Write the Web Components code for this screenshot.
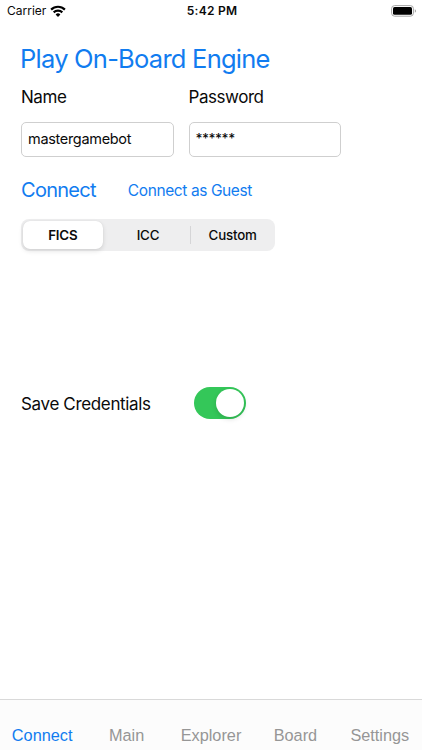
<!DOCTYPE html>
<html lang="en">
<head>
<meta charset="utf-8">
<title>Connect</title>
<style>
html, body {
  margin: 0;
  height: 100%;
  background: #fff;
  overflow: hidden;
}
</style>
</head>
<body>
<connect-app></connect-app>
<script>
function define(name, html) {
  const template = document.createElement('template');
  template.innerHTML = html;
  customElements.define(name, class extends HTMLElement {
    constructor() {
      super();
      this.attachShadow({ mode: 'open' }).appendChild(template.content.cloneNode(true));
    }
  });
}

define('status-bar', `
<style>
:host {
  display: grid;
  grid-template-columns: 1fr auto 1fr;
  align-items: center;
  box-sizing: border-box;
  height: 22px;
  padding: 0 5px 1px 7px;
  font-size: 12px;
}
.carrier { display: flex; align-items: center; gap: 4px; }
.time { font-weight: 600; letter-spacing: 0.25px; }
.battery { justify-self: end; display: flex; }
svg { display: block; }
</style>
<div class="carrier"><slot></slot>
  <svg width="16" height="12" viewBox="0 0 16 12">
    <g fill="none" stroke="#000" stroke-width="2.2">
      <path d="M1.1 4.6a9.8 9.8 0 0 1 13.8 0"/>
      <path d="M3.7 7.4a6.1 6.1 0 0 1 8.6 0"/>
    </g>
    <path d="M8 12 5.6 9.5a3.4 3.4 0 0 1 4.8 0z"/>
  </svg>
</div>
<div class="time"><slot name="time"></slot></div>
<div class="battery">
  <svg width="26" height="12" viewBox="0 0 26 12">
    <rect x="0.6" y="0.6" width="21.8" height="10.6" rx="3" fill="#fff" stroke="#a5a5a5"/>
    <rect x="2" y="2" width="19" height="7.8" rx="1.6"/>
    <path d="M23.8 4.2q1.3.5 1.3 1.8t-1.3 1.8z" fill="#a5a5a5"/>
  </svg>
</div>
`);

define('link-button', `
<style>
:host { display: block; color: #117cf0; white-space: nowrap; }
</style>
<slot></slot>
`);

define('text-field', `
<style>
:host { display: block; width: 152.5px; }
.label { font-size: 17px; line-height: 22px; letter-spacing: -0.45px; }
.box {
  box-sizing: border-box;
  height: 35px;
  margin-top: 14px;
  padding: 0 6px;
  border: 1px solid #cfcfcf;
  border-radius: 5px;
  font-size: 14.5px;
  line-height: 32px;
  letter-spacing: -0.32px;
}
:host([secure]) .box { font-size: 13.5px; font-weight: 500; letter-spacing: -0.5px; line-height: 31px; }
</style>
<div class="label"><slot name="label"></slot></div>
<div class="box"><slot></slot></div>
`);

define('segmented-control', `
<style>
:host {
  display: grid;
  grid-template-columns: repeat(3, 1fr);
  box-sizing: border-box;
  width: 254px;
  height: 32px;
  border-radius: 8px;
  background: #eeeeef;
}
</style>
<slot></slot>
`);

define('segment-item', `
<style>
:host {
  display: flex;
  box-sizing: border-box;
  padding: 2px;
  font-size: 13.3px;
  font-weight: 500;
  letter-spacing: -0.15px;
}
div {
  flex: 1;
  display: flex;
  align-items: center;
  justify-content: center;
  border-radius: 7px;
}
:host([selected]) { font-weight: 600; }
:host([selected]) div {
  margin-right: 1px;
  background: #fff;
  box-shadow: 0 2px 5px rgba(0, 0, 0, 0.12), 0 0 1px rgba(0, 0, 0, 0.1);
}
:host([divided]) {
  background: linear-gradient(#d5d5d7, #d5d5d7) 0 50% / 1px 18px no-repeat;
}
</style>
<div><slot></slot></div>
`);

define('toggle-switch', `
<style>
:host {
  display: flex;
  justify-content: flex-end;
  box-sizing: border-box;
  width: 52px;
  height: 32px;
  padding: 2px;
  border-radius: 16px;
  background: #34c759;
}
div {
  width: 28px;
  height: 28px;
  border-radius: 50%;
  background: #fff;
  box-shadow: 0 2px 5px rgba(0, 0, 0, 0.15);
}
</style>
<div></div>
`);

define('tab-bar', `
<style>
:host {
  display: grid;
  grid-template-columns: repeat(5, 1fr);
  box-sizing: border-box;
  height: 51px;
  padding-top: 24px;
  border-top: 1px solid #d9d9d9;
  background: #fcfcfc;
}
</style>
<slot></slot>
`);

define('tab-item', `
<style>
:host {
  display: block;
  text-align: center;
  font: 16.3px/22px "Liberation Sans", Arial, sans-serif;
  color: #969696;
}
:host([selected]) { color: #117cf0; }
</style>
<slot></slot>
`);

define('connect-app', `
<style>
:host {
  display: flex;
  flex-direction: column;
  height: 750px;
  font-family: Inter, Roboto, sans-serif;
  color: #0a0a0a;
}
main { flex: 1; padding: 21px 0 0 21px; }
.title { font-size: 25.5px; line-height: 32px; letter-spacing: -0.76px; margin-left: -1px; }
.fields { display: flex; gap: 15px; margin-top: 11px; }
.actions { display: flex; align-items: center; gap: 32px; height: 30px; margin: 18px 0 14px; }
.connect { font-size: 20px; letter-spacing: -0.72px; }
.guest { font-size: 15.5px; letter-spacing: -0.4px; }
.save { display: flex; align-items: center; margin-top: 136px; }
.save span { width: 173px; padding-top: 1px; font-size: 17px; letter-spacing: -0.35px; }
</style>
<status-bar>Carrier<span slot="time">5:42 PM</span></status-bar>
<main>
  <link-button class="title">Play On-Board Engine</link-button>
  <div class="fields">
    <text-field><span slot="label">Name</span>mastergamebot</text-field>
    <text-field secure><span slot="label">Password</span>******</text-field>
  </div>
  <div class="actions">
    <link-button class="connect">Connect</link-button>
    <link-button class="guest">Connect as Guest</link-button>
  </div>
  <segmented-control>
    <segment-item selected>FICS</segment-item>
    <segment-item>ICC</segment-item>
    <segment-item divided>Custom</segment-item>
  </segmented-control>
  <div class="save">
    <span>Save Credentials</span>
    <toggle-switch></toggle-switch>
  </div>
</main>
<tab-bar>
  <tab-item selected>Connect</tab-item>
  <tab-item>Main</tab-item>
  <tab-item>Explorer</tab-item>
  <tab-item>Board</tab-item>
  <tab-item>Settings</tab-item>
</tab-bar>
`);
</script>
</body>
</html>
